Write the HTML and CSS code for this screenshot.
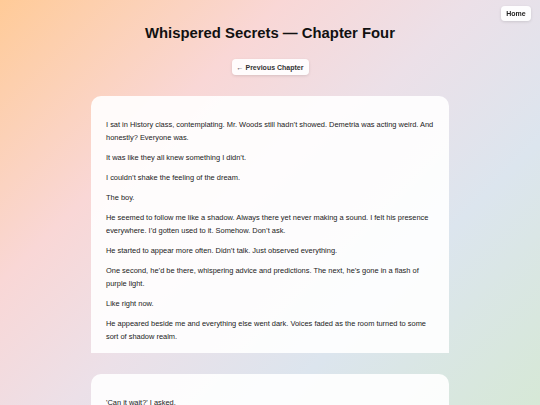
FILE: index.html
```html
<!DOCTYPE html>
<html lang="en">
<head>
<meta charset="utf-8">
<title>Whispered Secrets — Chapter Four</title>
<link rel="stylesheet" href="styles.css">
</head>
<body>
<a class="home-btn" href="#">Home</a>
<main class="page">
  <h1 class="title">Whispered Secrets — Chapter Four</h1>
  <nav class="chapter-nav">
    <a class="nav-btn" href="#">← Previous Chapter</a>
  </nav>
  <section class="card card-cut">
    <p>I sat in History class, contemplating. Mr. Woods still hadn’t showed. Demetria was acting weird. And honestly? Everyone was.</p>
    <p>It was like they all knew something I didn’t.</p>
    <p>I couldn’t shake the feeling of the dream.</p>
    <p>The boy.</p>
    <p>He seemed to follow me like a shadow. Always there yet never making a sound. I felt his presence everywhere. I’d gotten used to it. Somehow. Don’t ask.</p>
    <p>He started to appear more often. Didn’t talk. Just observed everything.</p>
    <p>One second, he’d be there, whispering advice and predictions. The next, he’s gone in a flash of purple light.</p>
    <p>Like right now.</p>
    <p>He appeared beside me and everything else went dark. Voices faded as the room turned to some sort of shadow realm.</p>
  </section>
  <section class="card">
    <p>'Can it wait?' I asked.</p>
    <p>'No,' he said.</p>
  </section>
</main>
</body>
</html>
```

FILE: styles.css
```css
html, body {
  margin: 0;
  padding: 0;
}
body {
  min-height: 405px;
  font-family: "Liberation Sans", Arial, sans-serif;
  color: #1f1f1f;
  background: linear-gradient(135deg, #ffcb98 0%, #f9d7d6 30%, #ece0e8 50%, #dce5ee 72%, #d6e8d6 100%);
  background-attachment: fixed;
}
.home-btn {
  position: fixed;
  top: 6px;
  right: 9px;
  width: 30px;
  height: 15px;
  display: flex;
  align-items: center;
  justify-content: center;
  background: rgba(255, 255, 255, 0.92);
  border-radius: 4px;
  box-shadow: 0 1px 3px rgba(0, 0, 0, 0.12);
  font-size: 7px;
  font-weight: bold;
  color: #222;
  text-decoration: none;
}
.page {
  width: 358px;
  margin: 0 auto;
  padding-top: 24px;
  display: flex;
  flex-direction: column;
}
.title {
  margin: 0;
  font-size: 14.85px;
  line-height: 18px;
  font-weight: bold;
  text-align: center;
  color: #111;
}
.chapter-nav {
  display: flex;
  justify-content: center;
  margin-top: 17px;
}
.nav-btn {
  width: 77px;
  height: 16px;
  display: flex;
  align-items: center;
  justify-content: center;
  background: rgba(255, 255, 255, 0.92);
  border-radius: 4px;
  box-shadow: 0 1px 3px rgba(0, 0, 0, 0.12);
  font-size: 7px;
  font-weight: bold;
  color: #333;
  text-decoration: none;
}
.card {
  margin-top: 21px;
  background: rgba(255, 255, 255, 0.9);
  border-radius: 10px;
  padding: 21.5px 10px 12px 15px;
  box-sizing: border-box;
}
.card-cut {
  height: 257px;
  overflow: hidden;
  border-radius: 10px 10px 0 0;
}
.card p {
  margin: 0 0 7px;
  font-size: 7.45px;
  line-height: 13px;
  color: #222;
}
```
